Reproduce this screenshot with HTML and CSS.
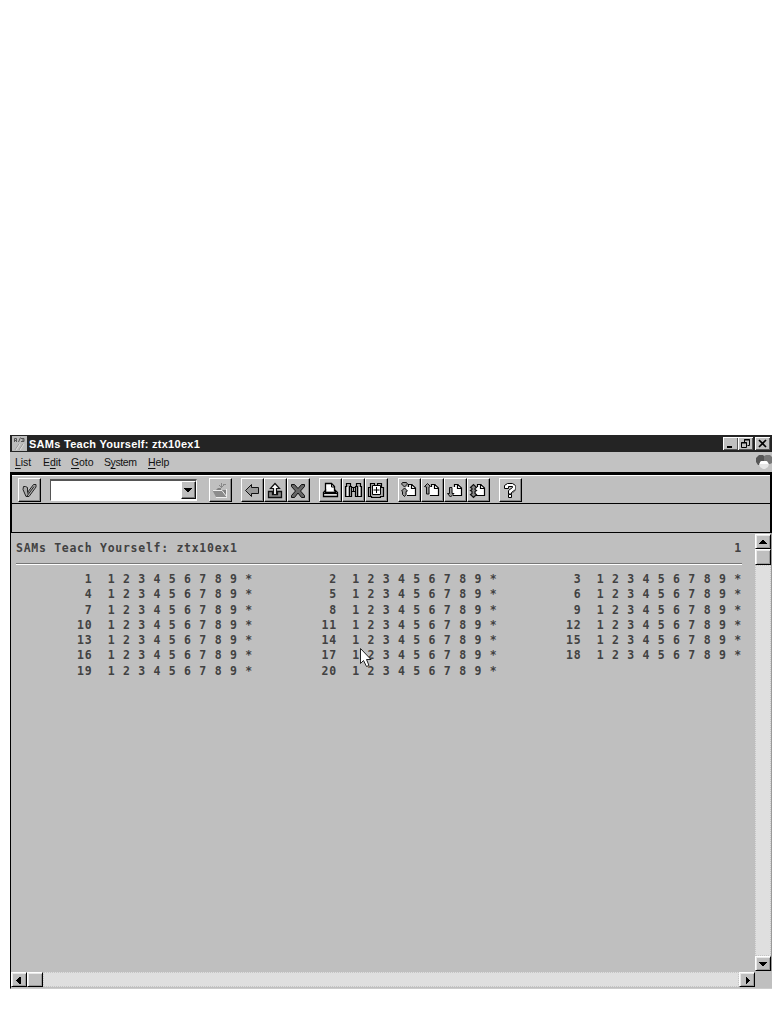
FILE: index.html
```html
<!DOCTYPE html>
<html lang="en">
<head>
<meta charset="utf-8">
<title>SAMs Teach Yourself: ztx10ex1</title>
<link rel="stylesheet" href="styles.css">
</head>
<body>
<main class="window">
  <header class="titlebar">
    <svg class="app-icon" viewBox="0 0 15 15"><path fill="#bdbdbd" d="M0 0h15v15H0z"/><path fill="none" stroke="#555" d="M2.5 6V2.5h2v2h-2m2 0V6M8.5 1.5L6.5 6M9 2.5h3v3H9m1-1.5h2"/><path fill="none" stroke="#999" d="M3 14l4-6M7 14l4-6"/><path fill="none" stroke="#ddd" d="M4 14l4-6M8 14l4-6"/></svg>
    <span class="title">SAMs Teach Yourself: ztx10ex1</span>
    <div class="controls">
      <button class="ctl" aria-label="Minimize"><svg viewBox="0 0 15 13"><path d="M4 9h5v2H4z"/></svg></button>
      <button class="ctl" aria-label="Restore"><svg viewBox="0 0 15 13"><path fill="none" stroke="#000" d="M6.500 5V2.500h5V8.500H9.500M6 3h6M3.500 5.500h5v5h-5zM3 6h6"/></svg></button>
      <button class="ctl close" aria-label="Close"><svg viewBox="0 0 15 13"><path fill="none" stroke="#000" stroke-width="1.700" d="M4 3l7 7M11 3l-7 7"/></svg></button>
    </div>
  </header>
  <nav class="menubar">
    <span class="m-list"><u>L</u>ist</span><span class="m-edit">E<u>d</u>it</span><span class="m-goto"><u>G</u>oto</span><span class="m-system">S<u>y</u>stem</span><span class="m-help"><u>H</u>elp</span>
    <svg class="sap" viewBox="0 0 16 16"><path fill="#555" d="M1 3l2-2h4l1 1v7l-3 2H2L0 8V4z"/><path fill="#777" d="M8 2l2-1h4l2 2v6l-2 1h-3L8 8z"/><path fill="#e6e6e6" d="M3 10l2-3h6l2 3-1 3-3 2H7l-3-2z"/><path fill="#fff" d="M4 8l2-1h4l2 2v1H4z"/></svg>
  </nav>
  <section class="toolbar">
    <button class="tool" aria-label="Enter"><svg viewBox="0 0 23 23"><path fill="#aaa" stroke="#222" d="M5.500 7.500h2l2 1v5l6-8h2.500v2.500l-7 9.500h-3l-3-7z"/><path fill="none" stroke="#222" d="M9.500 14.500l1-1M9 17l7-9.500"/></svg></button>
    <div class="combo"><span></span><button aria-label="Open list"><svg viewBox="0 0 14 16"><path d="M3 6h8v1h-1v1H9v1H8v1H6V9H5V8H4V7H3z"/></svg></button></div>
    <button class="tool save" aria-label="Save"><svg viewBox="0 0 23 23"><path fill="#808080" d="M7 11l2-2h3v2h5v7H7z"/><path fill="#8c8c8c" d="M3.500 11.500h10l3.500 6.500H7z"/><path fill="none" stroke="#888" d="M12.500 4v5M10 6l2.500 2.500L15 6M14 5.500h3"/><path fill="none" stroke="#eee" d="M4 11.500h9l4.500 6V10M7 18.500h11"/></svg></button>
    <div class="group nav">
      <button class="tool" aria-label="Back"><svg viewBox="0 0 23 23"><path fill="#999" stroke="#111" d="M4.500 11.500l6-6v3h7v6h-7v3z"/></svg></button>
      <button class="tool" aria-label="Exit"><svg viewBox="0 0 23 23"><path fill="#888" stroke="#111" stroke-width="1.300" d="M4.500 12.500h4v3h5v-3h4v6h-13z"/><path fill="#fff" stroke="#111" stroke-width="1.200" d="M9.500 15.500V9.500h-3l4.500-5 4.500 5h-3v6z"/></svg></button>
      <button class="tool" aria-label="Cancel"><svg viewBox="0 0 23 23"><path fill="#666" stroke="#111" d="M4.500 5.500h3l3.500 4 3.500-4h3v2l-4 4.500 4 4.500v2h-3l-3.500-4.500-3.500 4.500h-3v-2l4-4.500-4-4.500z"/></svg></button>
    </div>
    <div class="group print">
      <button class="tool" aria-label="Print"><svg viewBox="0 0 23 23"><path fill="#fff" stroke="#000" stroke-width="1.300" d="M6.500 12.500v-8h6l3 3v5"/><path fill="none" stroke="#000" d="M12.500 5v3h3"/><path fill="#ddd" stroke="#000" stroke-width="1.300" d="M6.500 11.500l-2 2v4h14v-4l-2-2v2h-10z"/><path stroke="#000" d="M5 14.500h13"/></svg></button>
      <button class="tool" aria-label="Find"><svg viewBox="0 0 23 23"><path fill="#aaa" stroke="#000" stroke-width="1.200" d="M3.500 17.500v-10h1v-3h4v3h1v10zM13.500 17.500v-10h1v-3h4v3h1v10z"/><path fill="none" stroke="#000" d="M7.500 7v10M15.500 7v10M11.500 8v5M10 8.500h3M10 12.500h3"/><path stroke="#eee" d="M5.500 8v9M17.500 8v9"/></svg></button>
      <button class="tool" aria-label="Find next"><svg viewBox="0 0 23 23"><path fill="#aaa" stroke="#000" stroke-width="1.200" d="M3.500 17.500v-9h2v-4h4v3h3v-3h4v4h2v9h-3v1h-9v-1z"/><path fill="#fff" stroke="#000" d="M7.500 6.500h8v9h-8z"/><path stroke="#000" d="M11.500 8v6M8.500 11h6M5.500 9v8"/></svg></button>
    </div>
    <div class="group pages">
      <button class="tool" aria-label="First page"><svg viewBox="0 0 23 23"><use href="#page"/><path fill="#999" stroke="#111" d="M3.500 5l1-1.500h4l1 1.500-3 3-3-3zM3.500 12l3-3 3 3-1.500.500v3l-1.500 2-2-2v-3z"/></svg></button>
      <button class="tool" aria-label="Previous page"><svg viewBox="0 0 23 23"><use href="#page"/><path fill="#999" stroke="#111" d="M3.500 7.500l3-3 3 3-1.500.500v7H5.500v-7z"/></svg></button>
      <button class="tool" aria-label="Next page"><svg viewBox="0 0 23 23"><use href="#page"/><path fill="#999" stroke="#111" d="M5.500 8.500h2.500v6h2l-3.500 3.500-3-3.500h2z"/></svg></button>
      <button class="tool" aria-label="Last page"><svg viewBox="0 0 23 23"><use href="#page"/><path fill="#888" stroke="#111" stroke-width="1.200" d="M3.500 8.500l3-3 3 3-1.500 1v1l1.500 1-1.500 1v2l1.500 1-3 3-3-3 1.500-1v-2l-1.500-1 1.500-1v-1z"/></svg></button>
    </div>
    <button class="tool help" aria-label="Help"><svg viewBox="0 0 23 23"><path fill="#fff" stroke="#000" d="M5.500 9.500v-3l3-2h5l3 2v4l-4 3v1.500h-3v-3.500l4-3v-1h-4v2zM9.500 15.500h3v3h-3z"/><path fill="none" stroke="#555" d="M16.500 6v5l-3 3"/></svg></button>
    <svg width="0" height="0"><defs><g id="page"><path fill="#fff" d="M8 8h3V5h4l3 4v7H9z"/><path fill="none" stroke="#000" stroke-width="1.200" d="M10.500 8V5.500h3.500l3.500 3.500v7.500H9M13.500 5.500v4h4"/></g></defs></svg>
  </section>
  <section class="appbar"></section>
  <section class="body">
    <article class="list">
      <div class="heading"><span>SAMs Teach Yourself: ztx10ex1</span><span>1</span></div>
      <pre class="rows">         1  1 2 3 4 5 6 7 8 9 *          2  1 2 3 4 5 6 7 8 9 *          3  1 2 3 4 5 6 7 8 9 *
         4  1 2 3 4 5 6 7 8 9 *          5  1 2 3 4 5 6 7 8 9 *          6  1 2 3 4 5 6 7 8 9 *
         7  1 2 3 4 5 6 7 8 9 *          8  1 2 3 4 5 6 7 8 9 *          9  1 2 3 4 5 6 7 8 9 *
        10  1 2 3 4 5 6 7 8 9 *         11  1 2 3 4 5 6 7 8 9 *         12  1 2 3 4 5 6 7 8 9 *
        13  1 2 3 4 5 6 7 8 9 *         14  1 2 3 4 5 6 7 8 9 *         15  1 2 3 4 5 6 7 8 9 *
        16  1 2 3 4 5 6 7 8 9 *         17  1 2 3 4 5 6 7 8 9 *         18  1 2 3 4 5 6 7 8 9 *
        19  1 2 3 4 5 6 7 8 9 *         20  1 2 3 4 5 6 7 8 9 *</pre>
    </article>
    <aside class="vscroll">
      <button class="sb" aria-label="Up"><svg viewBox="0 0 14 12"><path d="M6 4h2v1h1v1h1v1h1v1H3V7h1V6h1V5h1z"/></svg></button>
      <div class="sb thumb"></div>
      <div class="track"></div>
      <button class="sb down" aria-label="Down"><svg viewBox="0 0 14 12"><path d="M3 4h8v1h-1v1H9v1H8v1H6V7H5V6H4V5H3z"/></svg></button>
    </aside>
  </section>
  <footer class="hscroll">
    <button class="sb left" aria-label="Left"><svg viewBox="0 0 14 12"><path d="M5 5h1V4h1V3h2v7H7V9H6V8H5V7H4V6h1z"/></svg></button>
    <div class="sb left"></div>
    <div class="track"></div>
    <button class="sb right" aria-label="Right"><svg viewBox="0 0 14 12"><path d="M6 3h1v1h1v1h1v1h1v1H9v1H8v1H7v1H6z"/></svg></button>
  </footer>
  <svg class="pointer" viewBox="0 0 12 20"><path fill="#fff" stroke="#222" d="M.5.500v15l3-3 3 6 2.500-1-2.500-6h4.500z"/></svg>
</main>
</body>
</html>
```

FILE: styles.css
```css
* { box-sizing: border-box; }
body { margin: 0; background: #fff; height: 1011px; padding: 435px 9px 0 10px; font-family: "Liberation Sans", Arial, sans-serif; }
button { padding: 0; margin: 0; border: 0; border-radius: 0; }
svg { display: block; }
.window { position: relative; width: 762px; height: 554px; background: #bfbfbf; display: flex; flex-direction: column; }
.titlebar { height: 17px; background: #242424; display: flex; align-items: center; padding: 0 2px; color: #fff; }
.app-icon { width: 15px; height: 15px; }
.title { margin-left: 2px; font-size: 11px; line-height: 16px; font-weight: 700; letter-spacing: .27px; white-space: nowrap; }
.controls { display: flex; margin-left: auto; }
.ctl { width: 15px; height: 13px; background: #c0c0c0; box-shadow: inset 1px 1px #fff, inset -1px -1px #555; }
.ctl svg { width: 15px; height: 13px; }
.close { margin-left: 2px; }
.menubar { height: 20px; display: flex; align-items: flex-start; padding: 3px 0 0 5px; font-size: 10.5px; line-height: 14px; color: #111; background: #c2c2c2; }
.menubar span { white-space: nowrap; letter-spacing: -.1px; }
.menubar u { text-underline-offset: 2px; }
.m-list { width: 28px; }
.m-edit { width: 28px; }
.m-goto { width: 33px; }
.menubar .m-system { width: 44px; letter-spacing: -.4px; }
.m-help { width: 40px; }
.sap { width: 16px; height: 16px; margin: -1px 0 0 auto; }
.toolbar { height: 32px; border: solid #000; border-width: 3px 2px 1px; box-shadow: inset 0 1px #fff; display: flex; align-items: flex-start; padding: 3px 0 0 6px; }
.tool { width: 23px; height: 24px; background: #bfbfbf; border: 1px solid; border-color: #fff #000 #000 #fff; box-shadow: inset -1px -1px #888; }
.tool svg { width: 23px; height: 23px; margin: -1px; }
.combo { width: 147px; height: 22px; margin: 1px 0 0 9px; display: flex; background: #fff; border: solid; border-width: 2px 1px 1px 1px; border-color: #555 #fff #fff #555; justify-content: flex-end; }
.combo button { width: 15px; height: 18px; background: #bfbfbf; border: 1px solid; border-color: #fff #111 #111 #fff; box-shadow: inset -1px -1px #777; }
.combo svg { width: 14px; height: 16px; margin: -1px; }
.save { margin-left: 12px; }
.group { display: flex; }
.nav, .pages { margin-left: 9px; }
.print { margin-left: 9px; }
.pages { margin-left: 10px; }
.help { margin-left: 9px; }
.appbar { height: 29px; border: solid #000; border-width: 0 2px 1px; }
.body { height: 438px; display: flex; border-left: 1px solid #000; }
.list { flex: 1; padding-left: 5px; min-width: 0; color: #424242; font: 700 11.5px/15.25px "DejaVu Sans Mono", monospace; letter-spacing: .717px; overflow: hidden; }
.heading { width: 726px; height: 31px; padding-top: 8px; display: flex; justify-content: space-between; border-bottom: 1px solid #777; box-shadow: 0 1px #fff; white-space: pre; }
.rows { margin: 8px 0 0; font: inherit; white-space: pre; }
.vscroll { width: 17px; display: flex; flex-direction: column; border-right: 1px solid #999; padding-top: 1px; }
.sb { width: 16px; height: 15px; flex: none; background: #bfbfbf; border: 1px solid; border-color: #fff #000 #000 #fff; box-shadow: inset 1px 1px #e8e8e8, inset -1px -1px #999; }
.sb svg { width: 14px; height: 12px; }
.thumb { height: 16px; }
.track { flex: 1; background: #dfdfdf; border: 1px dotted #c5c5c5; }
.hscroll { height: 18px; display: flex; align-items: flex-start; border-left: 1px solid #000; padding: 1px 17px 0 0; border-bottom: 1px solid #ccc; }
.hscroll .track { height: 15px; }
.hscroll .sb { height: 15px; }
.pointer { position: absolute; left: 350px; top: 213px; width: 12px; height: 20px; }
```
